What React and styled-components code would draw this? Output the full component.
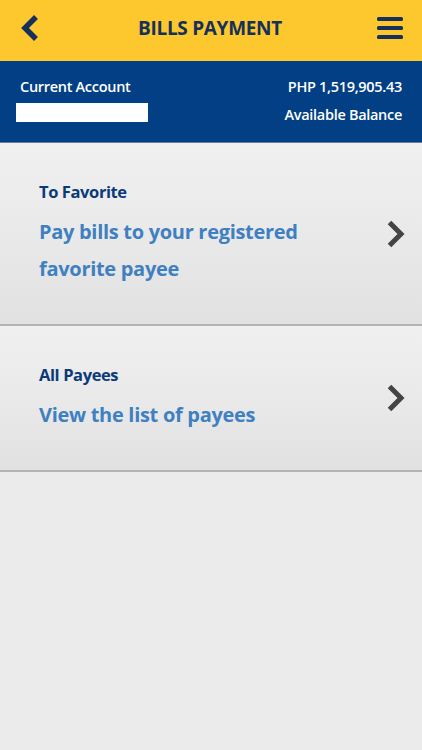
import styled, { createGlobalStyle } from 'styled-components';

const Global = createGlobalStyle`
  html, body {
    margin: 0;
    padding: 0;
    background: #ebebeb;
  }
  body {
    font-family: "Open Sans", "Noto Sans", sans-serif;
  }
`

const Screen = styled.div`
  width: 422px;
  min-height: 750px;
  background: #ebebeb;
`

const TopBar = styled.header`
  height: 61px;
  background: #fdc82d;
  display: flex;
  align-items: center;
  justify-content: space-between;
  padding: 0 18px 6px 16px;
  box-sizing: border-box;
`

const IconButton = styled.div`
  width: 28px;
  display: flex;
  align-items: center;
  justify-content: center;
`

const Title = styled.h1`
  margin: 0;
  font-size: 19px;
  font-weight: 700;
  color: #15305a;
  letter-spacing: -0.3px;
`

const AccountBar = styled.section`
  height: 82px;
  background: #023f85;
  display: flex;
  justify-content: space-between;
  padding: 16px 20px 0 16px;
  box-sizing: border-box;
  color: white;
  border-bottom: 1px solid #6a7fa0;
`

const Column = styled.div`
  display: flex;
  flex-direction: column;
  align-items: ${p => (p.right ? 'flex-end' : 'flex-start')};
  gap: ${p => (p.right ? '8px' : '6px')};
`

const Label = styled.span`
  font-size: 14.5px;
  font-weight: 600;
  line-height: 20px;
  padding-left: ${p => p.indent || 0}px;
  letter-spacing: -0.3px;
`

const AccountBox = styled.div`
  width: 132px;
  height: 19px;
  background: #fff;
`

const Option = styled.div`
  height: ${p => p.height}px;
  background: linear-gradient(180deg, #f0f0f0 0%, #e8e8e8 60%, #e1e1e1 100%);
  border-bottom: 2px solid #b3b3b3;
  display: flex;
  align-items: center;
  justify-content: space-between;
  padding: 0 16px 0 39px;
  box-sizing: border-box;
  cursor: pointer;
`

const OptionText = styled.div`
  display: flex;
  flex-direction: column;
`

const OptionTitle = styled.span`
  font-size: 16.5px;
  font-weight: 700;
  color: #0b3a78;
  letter-spacing: -0.4px;
  line-height: 24px;
  margin-bottom: 9px;
`

const OptionDesc = styled.span`
  font-size: 20px;
  font-weight: 700;
  color: #3f80c2;
  letter-spacing: -0.3px;
  line-height: 37px;
`

const Chevron = () => (
  <svg width="20" height="30" viewBox="0 0 20 30">
    <path d="M3.5 3.5 L15 15 L3.5 26.5" fill="none" stroke="#444" strokeWidth="5" strokeLinejoin="miter" />
  </svg>
)

const App = () => {
  return (
    <Screen>
      <Global />
      <TopBar>
        <IconButton>
          <svg width="20" height="28" viewBox="0 0 20 28">
            <path d="M16 3 L5 14 L16 25" fill="none" stroke="#15305a" strokeWidth="5.5" />
          </svg>
        </IconButton>
        <Title>BILLS PAYMENT</Title>
        <IconButton>
          <svg width="26" height="24" viewBox="0 0 26 24">
            <rect x="0" y="1" width="26" height="4" rx="1.5" fill="#15305a" />
            <rect x="0" y="10" width="26" height="4" rx="1.5" fill="#15305a" />
            <rect x="0" y="19" width="26" height="4" rx="1.5" fill="#15305a" />
          </svg>
        </IconButton>
      </TopBar>

      <AccountBar>
        <Column>
          <Label indent={4}>Current Account</Label>
          <AccountBox />
        </Column>
        <Column right>
          <Label>PHP 1,519,905.43</Label>
          <Label>Available Balance</Label>
        </Column>
      </AccountBar>

      <Option height={183}>
        <OptionText>
          <OptionTitle>To Favorite</OptionTitle>
          <OptionDesc>Pay bills to your registered<br />favorite payee</OptionDesc>
        </OptionText>
        <Chevron />
      </Option>

      <Option height={146}>
        <OptionText>
          <OptionTitle>All Payees</OptionTitle>
          <OptionDesc>View the list of payees</OptionDesc>
        </OptionText>
        <Chevron />
      </Option>
    </Screen>
  )
}

export default App;
